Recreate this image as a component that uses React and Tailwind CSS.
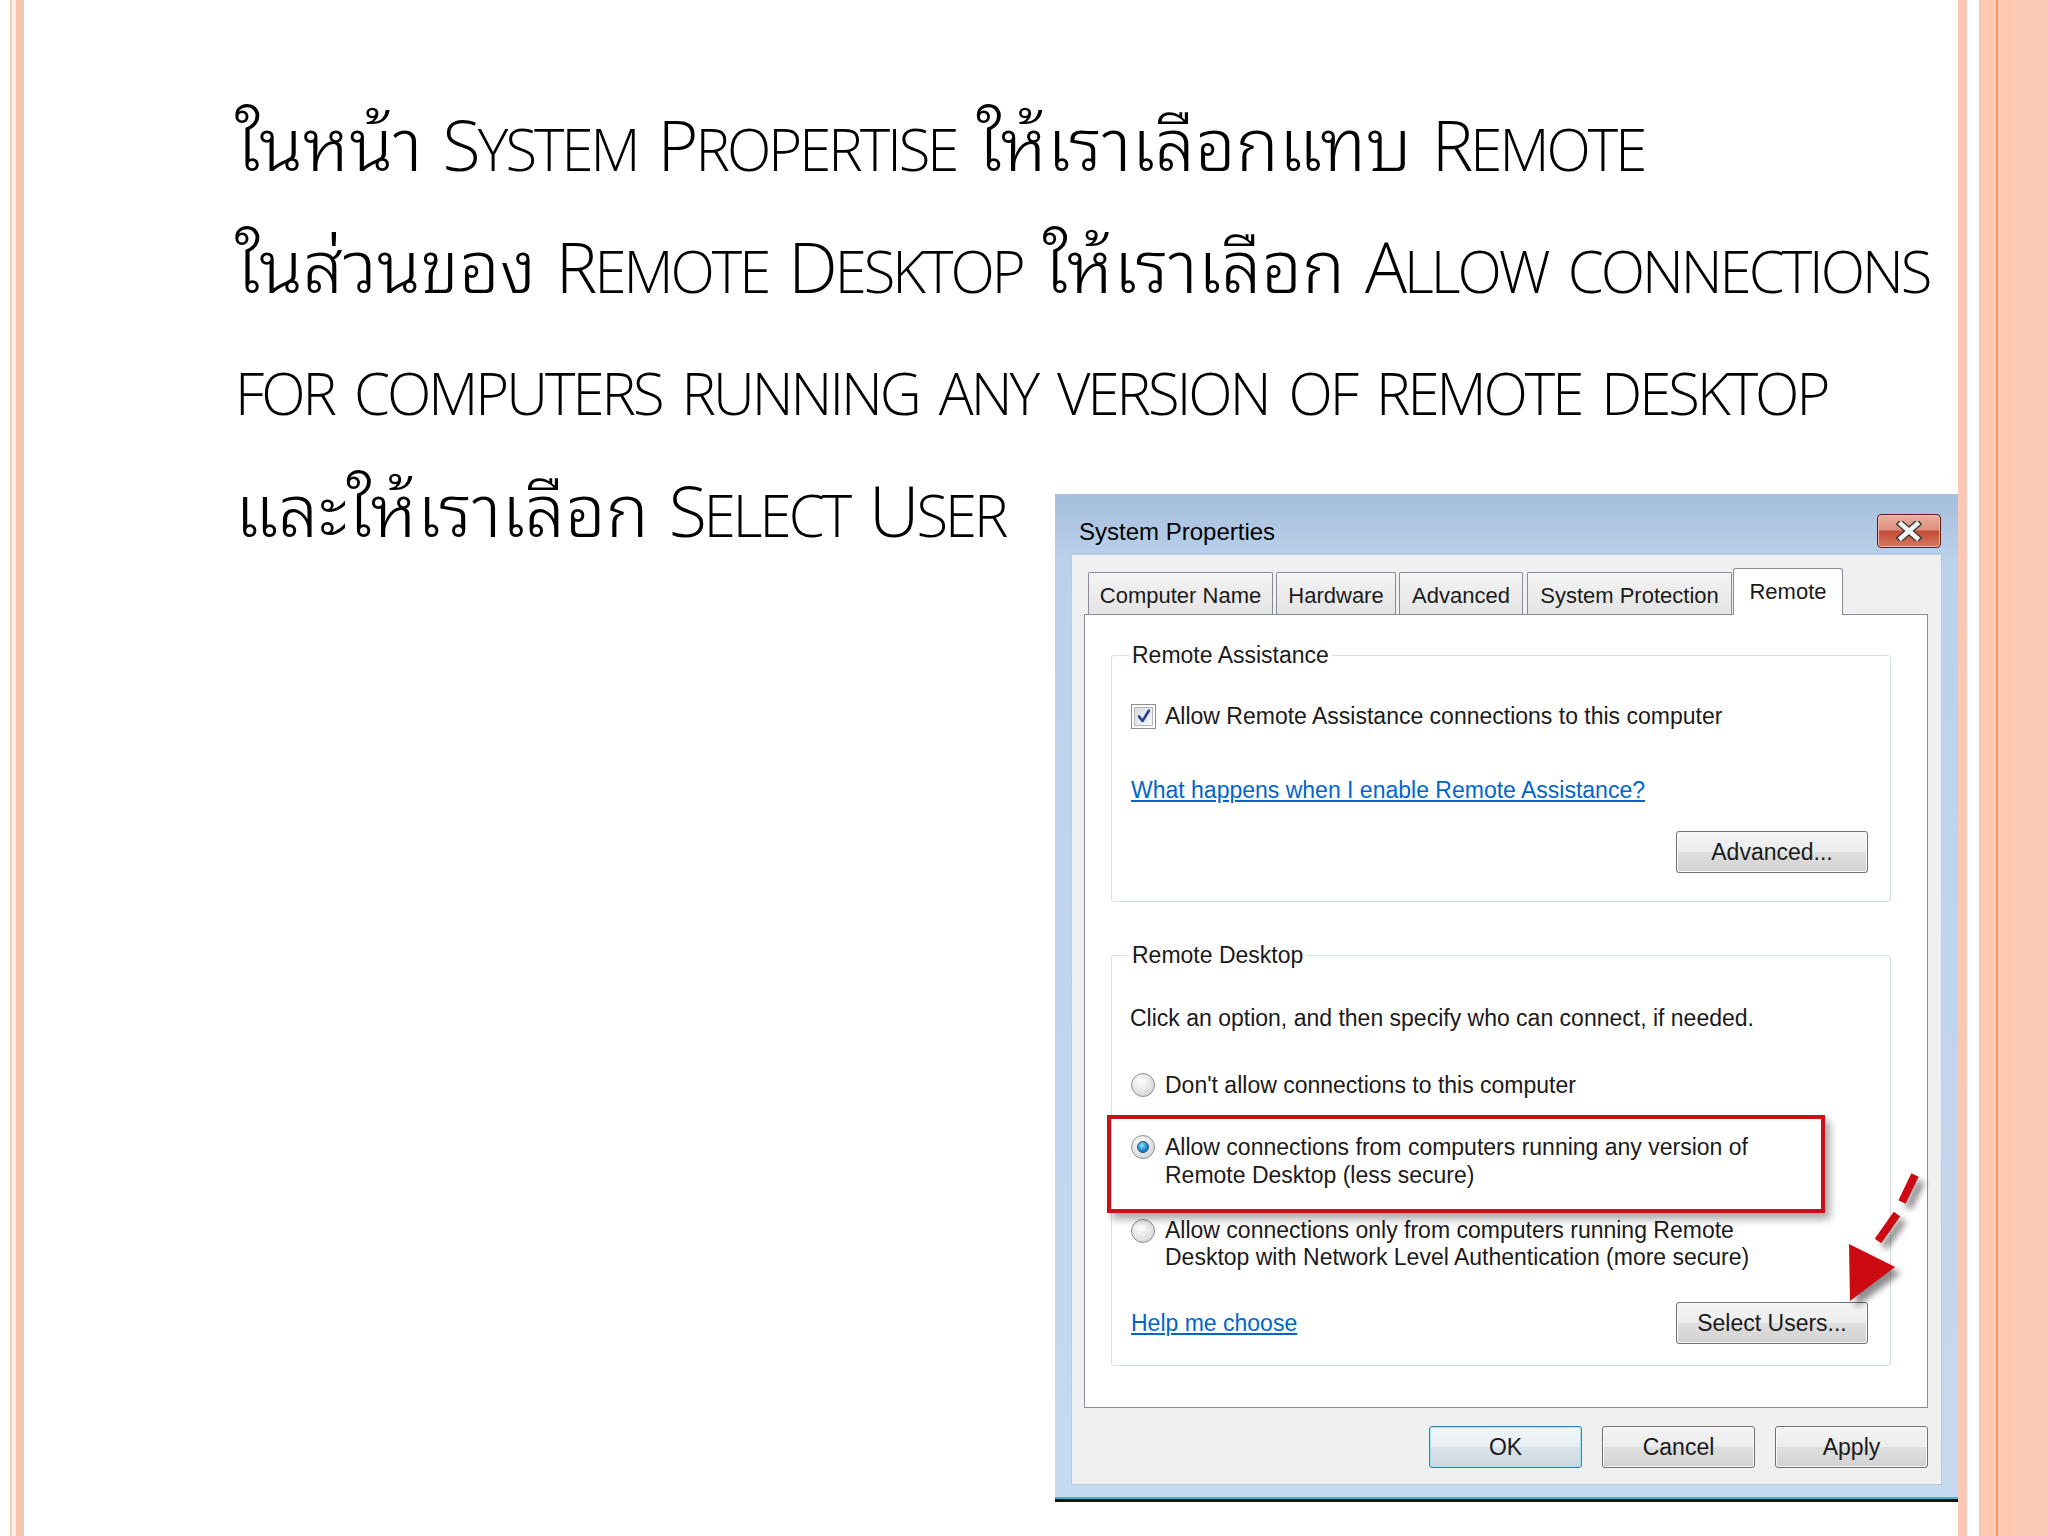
import React from 'react';

const kindClass = {
  th: "font-['Noto_Sans_Thai_Looped','Loma','Garuda','Noto_Sans_Thai',sans-serif] text-[72px] leading-none",
  cap: 'text-[70px] leading-none tracking-[-3px]',
  sm: 'text-[58px] leading-none uppercase tracking-[-3px]',
  sp: '',
};

const SmallCaps = ({ text }) => {
  const parts = [];
  let cur = null;
  for (const ch of text) {
    let kind = 'sp';
    if (/[\u0E00-\u0E7F]/.test(ch)) kind = 'th';
    else if (/[A-Z]/.test(ch)) kind = 'cap';
    else if (/[a-z]/.test(ch)) kind = 'sm';
    if (cur && cur.kind === kind) cur.s += ch;
    else {
      cur = { kind, s: ch };
      parts.push(cur);
    }
  }
  return parts.map((p, i) => (
    <span key={i} className={kindClass[p.kind]}>
      {p.s}
    </span>
  ));
};

const Line = ({ text }) => (
  <div className="h-[122px] whitespace-nowrap text-[77px] leading-[122px]">
    <SmallCaps text={text} />
  </div>
);

const WinButton = ({ label, className = '', focused }) => (
  <div
    className={`flex h-[42px] items-center justify-center rounded-[3px] border ${
      focused
        ? 'border-[#3c7fb1] bg-[linear-gradient(#f1f5f8_0%,#e8eef3_50%,#dae3ea_50%,#cdd8e2_100%)] shadow-[inset_0_0_0_1px_#a6e2f6]'
        : 'border-[#707070] bg-[linear-gradient(#f4f4f4_0%,#ececec_50%,#dfdfdf_50%,#d2d2d2_100%)] shadow-[inset_0_0_0_1px_#fbfbfb]'
    } ${className}`}
  >
    {label}
  </div>
);

const Radio = ({ checked }) => (
  <div className="flex h-[24px] w-[24px] shrink-0 items-center justify-center rounded-full border border-[#8e8f8f] bg-[radial-gradient(circle_at_40%_35%,#ffffff,#e2e2e2_55%,#c9c9c9)]">
    {checked && (
      <div className="h-[12px] w-[12px] rounded-full border border-[#1c4f7c] bg-[radial-gradient(circle_at_40%_35%,#8fe3ff,#1f8ad0_55%,#0d4f8a)]" />
    )}
  </div>
);

const Checkbox = () => (
  <div className="flex h-[25px] w-[25px] shrink-0 items-center justify-center border border-[#8e8f8f] bg-white">
    <div className="flex h-[19px] w-[19px] items-center justify-center border border-[#b3b7bd] bg-[linear-gradient(135deg,#d9dde3,#f7f8f9)]">
      <svg width="16" height="16" viewBox="0 0 16 16">
        <path d="M3 8.5 L6.5 13 L13 2.5" fill="none" stroke="#2b3f93" strokeWidth="2.6" strokeLinecap="round" strokeLinejoin="round" />
      </svg>
    </div>
  </div>
);

const Tab = ({ label, className = '' }) => (
  <div
    className={`flex h-[42px] items-center justify-center rounded-t-[2px] border border-b-0 border-[#898c95] bg-[linear-gradient(#f4f4f4,#e4e4e4)] pt-[4px] ${className}`}
  >
    {label}
  </div>
);

const Dialog = () => (
  <div className="relative mt-[47px] flex h-[1008px] w-[903px] shrink-0 flex-col bg-[linear-gradient(#a5bedb,#bcd2ec_70px,#c5d9ef)] font-['Liberation_Sans',Arial,sans-serif] text-[23px] text-[#1a1a1a]">
    {/* title bar */}
    <div className="flex h-[60px] items-start justify-between">
      <div className="pl-[24px] pt-[24px] text-[24px] leading-[28px] text-black">System Properties</div>
      <div className="mr-[17px] mt-[20px] flex h-[34px] w-[64px] items-center justify-center rounded-[4px] border border-[#5b1c16] bg-[linear-gradient(#eab0a3_0%,#dd8f7d_45%,#c44a34_52%,#d57a60_100%)] shadow-[inset_0_0_0_1px_#f1b9ab]">
        <svg width="28" height="20" viewBox="0 0 28 20">
          <path d="M6 3 L22 17 M22 3 L6 17" stroke="#3d3d3d" strokeWidth="7.5" strokeLinecap="square" />
          <path d="M6 3 L22 17 M22 3 L6 17" stroke="#f6f6f6" strokeWidth="4.5" strokeLinecap="square" />
        </svg>
      </div>
    </div>

    {/* client area */}
    <div className="mx-[16px] flex h-[931px] flex-col border border-[#b8cbe2] bg-[#f0f0f0] pl-[12px] pr-[14px] pt-[13px]">
      <div className="flex items-end pl-[4px] text-[22px]">
        <Tab label="Computer Name" className="w-[185px]" />
        <Tab label="Hardware" className="ml-[3px] w-[120px]" />
        <Tab label="Advanced" className="ml-[3px] w-[124px]" />
        <Tab label="System Protection" className="ml-[4px] w-[205px]" />
        <div className="relative z-10 -mb-px ml-[1px] flex h-[47px] w-[110px] justify-center rounded-t-[3px] border border-b-0 border-[#898c95] bg-white pt-[6px]">
          Remote
        </div>
      </div>

      <div className="flex h-[794px] w-[844px] flex-col border border-[#898c95] bg-white">
        <fieldset className="ml-[26px] mt-[27px] w-[780px] rounded-[3px] border border-[#d5dfe5] pb-[28px]">
          <legend className="ml-[17px] px-[3px] leading-[26px]">Remote Assistance</legend>
          <div className="mt-[35px] flex h-[26px] items-center gap-[9px] pl-[19px]">
            <Checkbox />
            <span>Allow Remote Assistance connections to this computer</span>
          </div>
          <div className="mt-[48px] pl-[19px] leading-[26px] text-[#0066cc] underline">
            What happens when I enable Remote Assistance?
          </div>
          <div className="mt-[28px] flex justify-end pr-[22px]">
            <WinButton label="Advanced..." className="w-[192px]" />
          </div>
        </fieldset>

        <fieldset className="relative ml-[26px] mt-[40px] w-[780px] rounded-[3px] border border-[#d5dfe5] pb-[21px]">
          <legend className="ml-[17px] px-[3px] leading-[26px]">Remote Desktop</legend>
          <div className="mt-[37px] pl-[18px] leading-[26px]">
            Click an option, and then specify who can connect, if needed.
          </div>
          <div className="mt-[41px] flex h-[26px] items-center gap-[10px] pl-[19px]">
            <Radio />
            <span>Don't allow connections to this computer</span>
          </div>
          <div className="relative mt-[35px] flex items-start gap-[10px] pl-[19px]">
            <div className="absolute left-[-5px] top-[-18px] h-[98px] w-[718px] border-[4px] border-[#c8101a] shadow-[5px_6px_8px_rgba(0,0,0,0.35)]" />
            <div className="mt-[2px]">
              <Radio checked />
            </div>
            <div className="leading-[28px]">
              <div>Allow connections from computers running any version of</div>
              <div>Remote Desktop (less secure)</div>
            </div>
          </div>
          <div className="mt-[28px] flex items-start gap-[10px] pl-[19px]">
            <div className="mt-[2px]">
              <Radio />
            </div>
            <div className="leading-[27px]">
              <div>Allow connections only from computers running Remote</div>
              <div>Desktop with Network Level Authentication (more secure)</div>
            </div>
          </div>
          <div className="mt-[31px] flex items-center justify-between pl-[19px] pr-[22px]">
            <span className="text-[#0066cc] underline">Help me choose</span>
            <WinButton label="Select Users..." className="w-[192px]" />
          </div>
        </fieldset>
      </div>

      <div className="-mr-px mt-[18px] flex justify-end gap-[20px]">
        <WinButton label="OK" focused className="w-[153px]" />
        <WinButton label="Cancel" className="w-[153px]" />
        <WinButton label="Apply" className="w-[153px]" />
      </div>
    </div>

    <div className="mt-auto h-[2px] bg-[#3fb6d6]" />
    <div className="h-[3px] bg-[#111111]" />

    {/* dashed arrow */}
    <svg className="absolute left-[780px] top-[670px]" width="100" height="160" viewBox="0 0 100 160">
      <defs>
        <filter id="sh" x="-50%" y="-50%" width="200%" height="200%">
          <feGaussianBlur stdDeviation="3" />
        </filter>
      </defs>
      <g transform="translate(6 6)" opacity="0.45" filter="url(#sh)">
        <path d="M80 11 L67 38 M62 50 L43 77" stroke="#000" strokeWidth="8" />
        <polygon points="14,80 15,137 60,103" fill="#000" />
      </g>
      <path d="M80 11 L67 38 M62 50 L43 77" stroke="#cc0a12" strokeWidth="8" />
      <polygon points="14,80 15,137 60,103" fill="#cc0a12" />
    </svg>
  </div>
);

export default function App() {
  return (
    <div className="flex h-[1536px] w-[2048px] overflow-hidden bg-white">
      <div className="flex w-[25px] shrink-0">
        <div className="w-[10px]" />
        <div className="w-[2px] bg-[#f6cdbf]" />
        <div className="w-[4px] bg-[#fdeee8]" />
        <div className="w-[8px] bg-[#f8c3ab]" />
        <div className="w-[1px]" />
      </div>

      <main className="flex w-[1933px] shrink-0 flex-col pl-[210px] pt-[81px] font-['Open_Sans',sans-serif] font-light text-black">
        <Line text="ในหน้า System Propertise ให้เราเลือกแทบ Remote" />
        <Line text="ในส่วนของ Remote Desktop ให้เราเลือก Allow connections" />
        <Line text="for computers running any version of remote desktop" />
        <div className="flex items-start">
          <div className="w-[820px] shrink-0">
            <Line text="และให้เราเลือก Select User" />
          </div>
          <Dialog />
        </div>
      </main>

      <div className="flex w-[90px] shrink-0">
        <div className="w-[9px] bg-[#fbc8b5]" />
        <div className="w-[12px]" />
        <div className="w-[17px] bg-[#fcc8b2]" />
        <div className="w-[2px] bg-[#f4955f]" />
        <div className="w-[14px] bg-[#fcc8b2]" />
        <div className="w-[36px] bg-[#fcc9b4]" />
      </div>
    </div>
  );
}
